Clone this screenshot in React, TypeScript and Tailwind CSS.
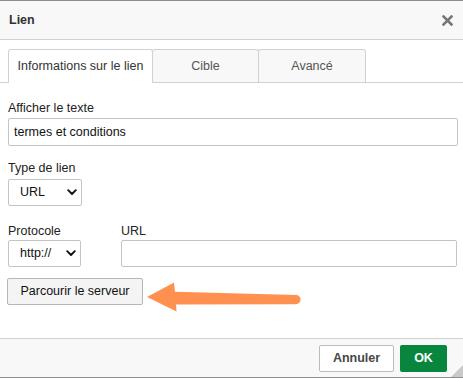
import React from 'react';

const Chevron = () => (
  <svg width="10" height="7" viewBox="0 0 10 7" className="shrink-0">
    <path d="M1.2 1.2 L5 5 L8.8 1.2" fill="none" stroke="#111" strokeWidth="1.9" strokeLinecap="round" strokeLinejoin="round" />
  </svg>
);

const FakeSelect = ({ value, width }: { value: string; width: string }) => (
  <div className={`${width} h-[27px] flex items-center justify-between pl-[11px] pr-[4px] border border-[#c4c4c4] rounded-[2px] bg-white text-[#111]`}>
    <span>{value}</span>
    <Chevron />
  </div>
);

const App = () => {
  const tabs = [
    { label: 'Informations sur le lien', active: true, w: 'w-[145px]' },
    { label: 'Cible', active: false, w: 'w-[107px]' },
    { label: 'Avancé', active: false, w: 'w-[108px]' },
  ];

  return (
    <div className="relative w-[463px] h-[378px] flex flex-col bg-white border-t border-b border-[#8e8e8e] font-['Liberation_Sans',Arial,sans-serif] text-[12.5px] text-[#333] overflow-hidden">
      {/* Title bar */}
      <div className="h-[39px] shrink-0 flex items-center justify-between pl-[9px] pr-[10px] bg-[#f8f8f8] border-b border-[#d1d1d1]">
        <span className="font-bold text-[#333]">Lien</span>
        <svg width="11" height="11" viewBox="0 0 11 11">
          <path d="M1.5 1.5 L9.5 9.5 M9.5 1.5 L1.5 9.5" stroke="#777" strokeWidth="2.6" strokeLinecap="square" />
        </svg>
      </div>

      {/* Tabs */}
      <div className="shrink-0 flex items-end pl-[8px] pt-[9px] border-b border-[#d1d1d1]">
        {tabs.map((tab) => (
          <div
            key={tab.label}
            className={
              tab.active
                ? `${tab.w} h-[34px] -mb-px flex items-center justify-center bg-white border border-b-0 border-[#d1d1d1] rounded-t-[3px] text-[#333]`
                : `${tab.w} h-[33px] -ml-px flex items-center justify-center bg-[#f8f8f8] border border-b-0 border-[#d1d1d1] rounded-t-[3px] text-[#555]`
            }
          >
            {tab.label}
          </div>
        ))}
      </div>

      {/* Body */}
      <div className="flex-1 flex flex-col pl-[8px] pr-[5px] pt-[18px] text-[#222]">
        <label className="leading-[15px]">Afficher le texte</label>
        <div className="mt-[2px] h-[28px] flex items-center px-[5px] border border-[#c4c4c4] rounded-[2px] text-[#111]">
          termes et conditions
        </div>

        <label className="mt-[15px] leading-[15px]">Type de lien</label>
        <div className="mt-[3px]">
          <FakeSelect value="URL" width="w-[74px]" />
        </div>

        <div className="mt-[18px] flex gap-[40px]">
          <div className="flex flex-col">
            <label className="leading-[15px]">Protocole</label>
            <div className="mt-[1px]">
              <FakeSelect value="http://" width="w-[73px]" />
            </div>
          </div>
          <div className="flex-1 flex flex-col">
            <label className="leading-[15px]">URL</label>
            <div className="mt-[1px] mr-[1px] h-[27px] border border-[#c4c4c4] rounded-[2px]" />
          </div>
        </div>

        <div className="mt-[11px] -ml-px">
          <button className="h-[27px] w-[136px] bg-[#f4f4f4] border border-[#b6b6b6] rounded-[2px] text-[#111]">
            Parcourir le serveur
          </button>
        </div>
      </div>

      {/* Footer */}
      <div className="h-[39px] shrink-0 flex items-center justify-end gap-[6px] pr-[16px] bg-[#f8f8f8] border-t border-[#d1d1d1]">
        <button className="h-[27px] w-[75px] bg-white border border-[#bcbcbc] rounded-[2px] font-bold text-[#474747]">
          Annuler
        </button>
        <button className="h-[27px] w-[47px] bg-[#09863e] rounded-[2px] font-bold text-white">
          OK
        </button>
      </div>

      {/* Resize grip */}
      <svg className="absolute right-0 bottom-0" width="12" height="12" viewBox="0 0 12 12">
        <polygon points="12,0 12,12 0,12" fill="#c9c9c9" />
      </svg>

      {/* Annotation arrow */}
      <svg className="absolute left-0 top-[-1px] pointer-events-none" width="463" height="378" viewBox="0 0 463 378">
        <path
          d="M147 297 L174 282.5 L175 291.7 L296 295 A4.6 4.6 0 0 1 296 304.2 L176 304.5 L176.5 311.5 Z"
          fill="#ff904f"
        />
      </svg>
    </div>
  );
};

export default App;
